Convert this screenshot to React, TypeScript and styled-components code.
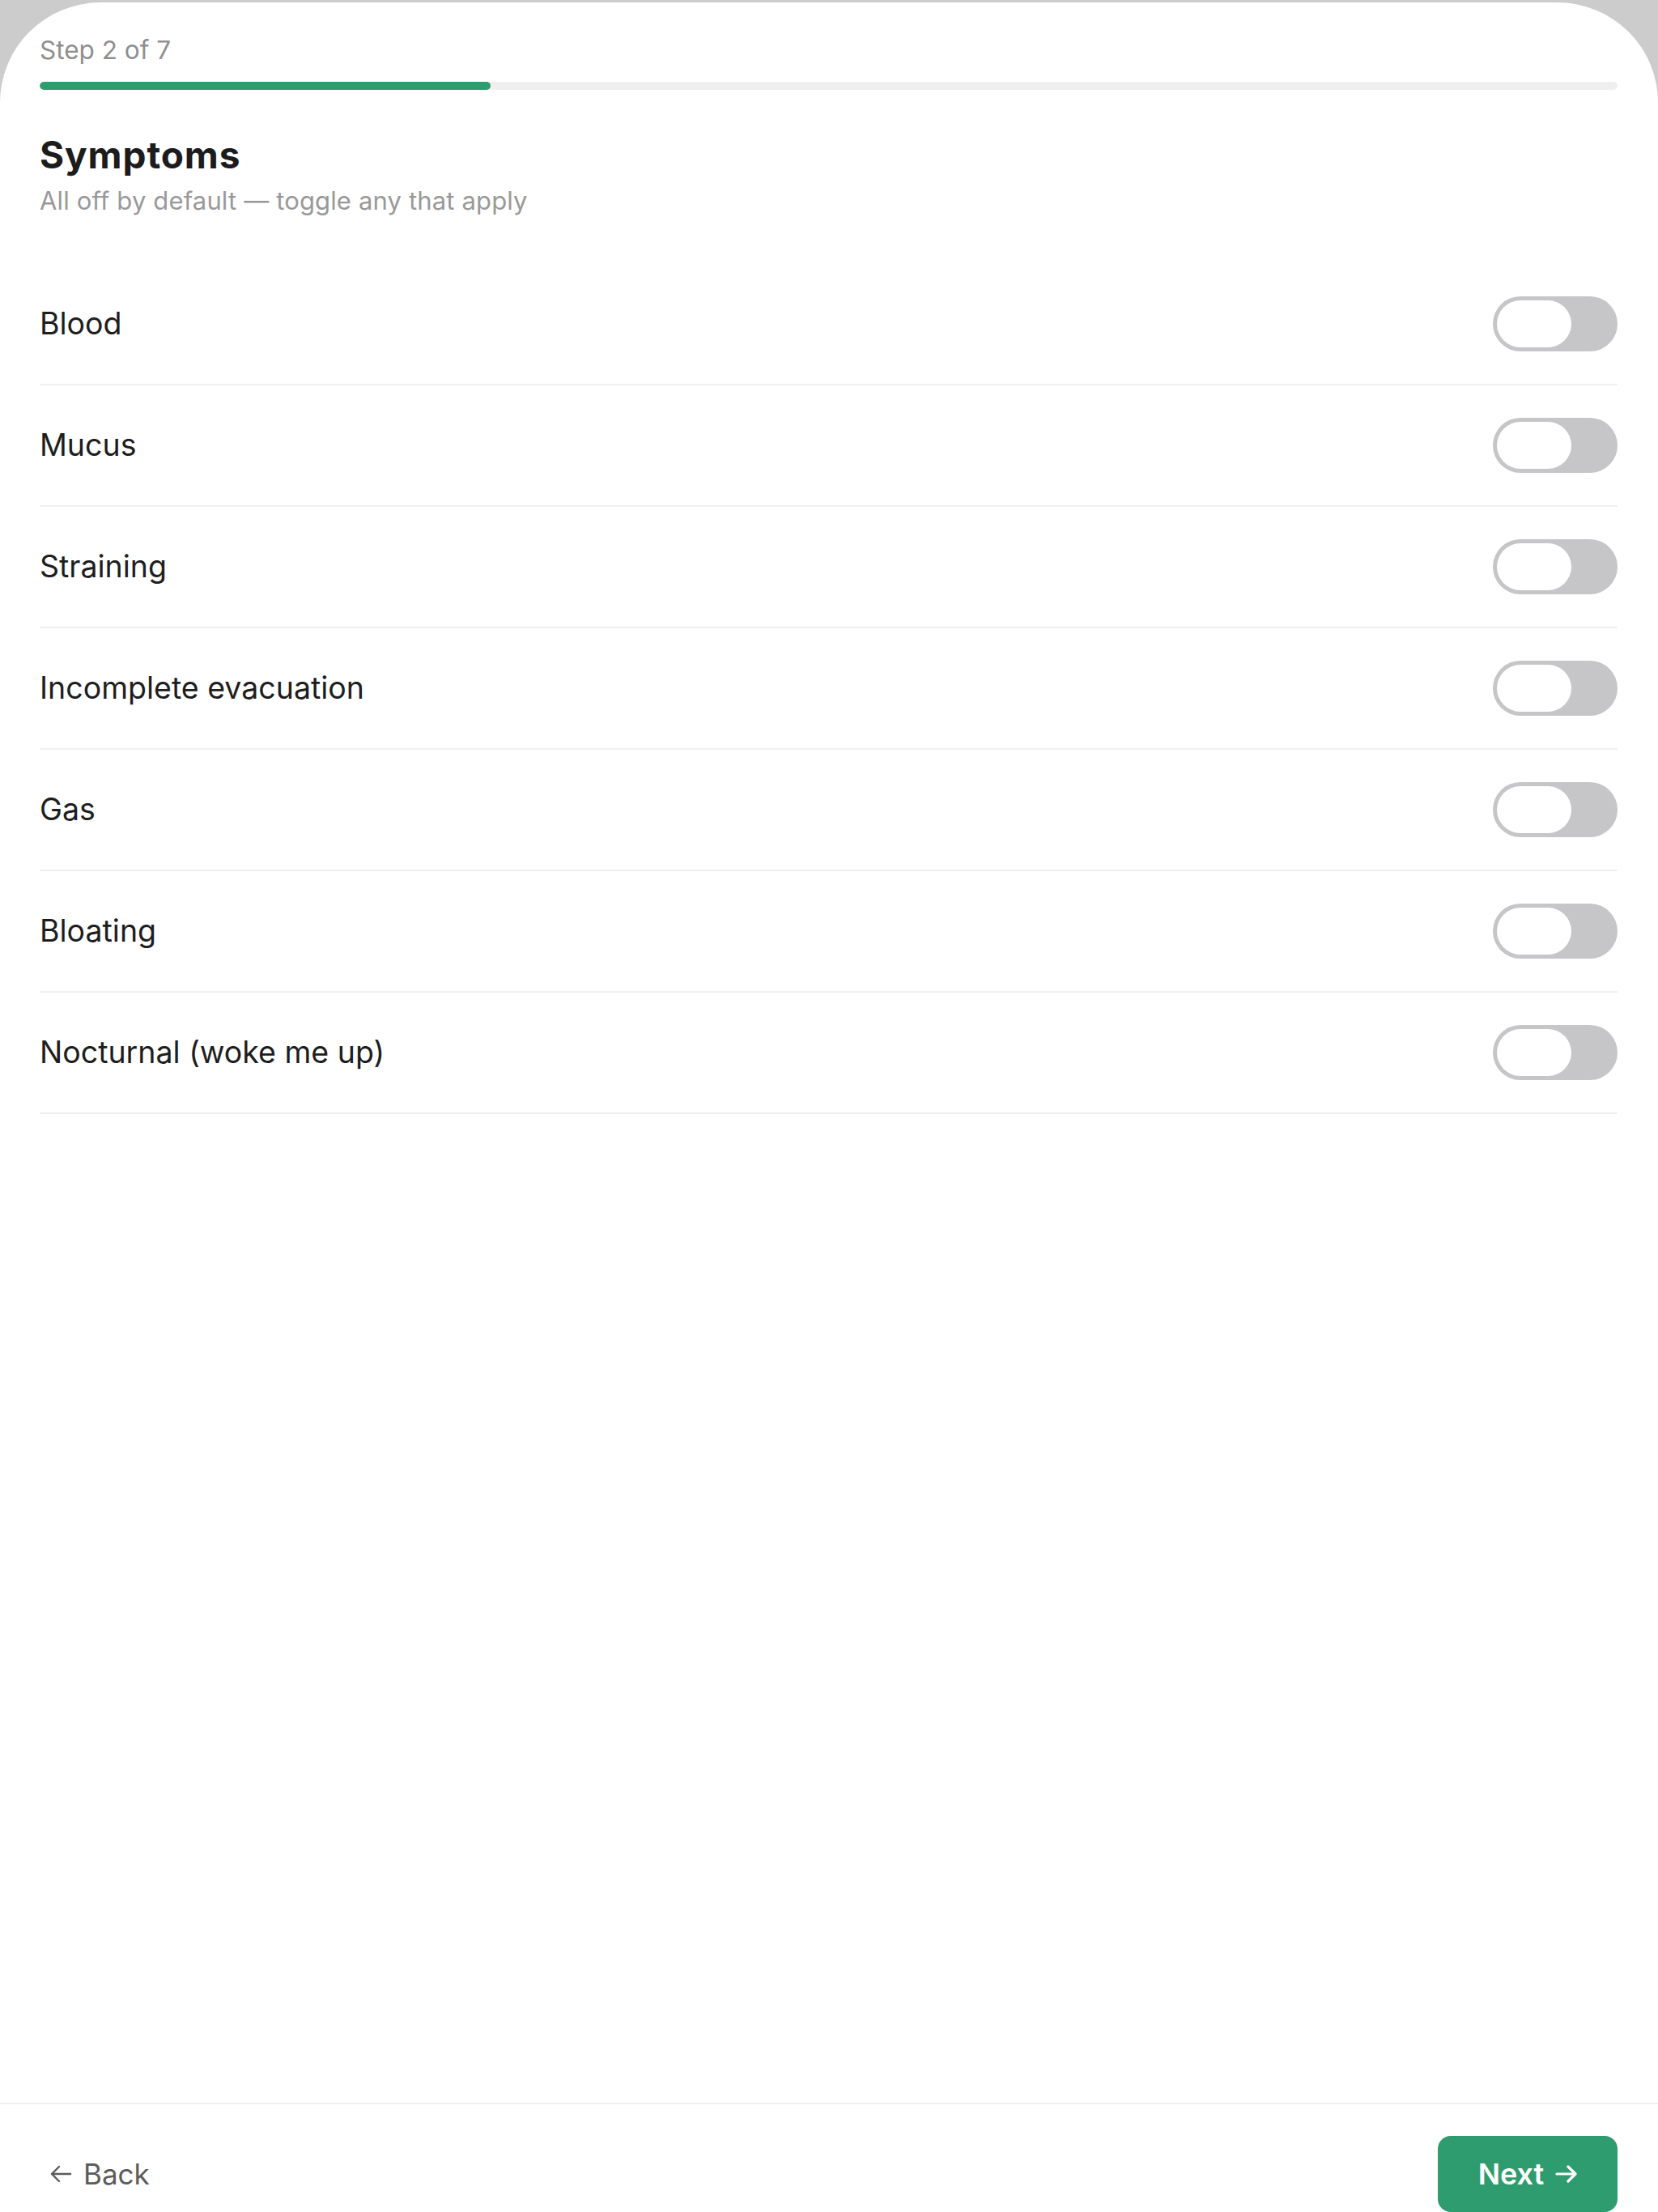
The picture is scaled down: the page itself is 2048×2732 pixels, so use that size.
import React, { useState } from 'react';
import styled, { createGlobalStyle } from 'styled-components';

const GlobalStyle = createGlobalStyle`
  html, body {
    margin: 0;
    padding: 0;
    background: #cccccc;
  }
  body {
    font-family: Inter, "Noto Sans", "Liberation Sans", sans-serif;
    -webkit-font-smoothing: antialiased;
  }
  * {
    box-sizing: border-box;
  }
`;

const ACCENT = '#2f9c6f';

const Sheet = styled.div`
  margin-top: 3px;
  height: calc(100vh - 3px);
  background: #ffffff;
  border-top-left-radius: 124px;
  border-top-right-radius: 124px;
  display: flex;
  flex-direction: column;
  overflow: hidden;
`;

const Body = styled.main`
  flex: 1;
  padding: 40px 50px 0 49px;
  display: flex;
  flex-direction: column;
`;

const StepLabel = styled.div`
  font-size: 31.5px;
  line-height: 37px;
  color: #8f8f8f;
`;

const ProgressTrack = styled.div`
  margin-top: 21px;
  height: 10px;
  border-radius: 5px;
  background: #efefef;
  overflow: hidden;
`;

const ProgressFill = styled.div`
  height: 100%;
  border-radius: 5px;
  background: ${ACCENT};
`;

const Title = styled.h1`
  margin: 54px 0 0;
  font-size: 46px;
  line-height: 52px;
  font-weight: 700;
  color: #1c1c1c;
  letter-spacing: 0.9px;
`;

const Subtitle = styled.p`
  margin: 13px 0 0;
  font-size: 31px;
  line-height: 36px;
  color: #999999;
  letter-spacing: 0.15px;
`;

const List = styled.ul`
  list-style: none;
  margin: 60px 0 0;
  padding: 0;
`;

const Row = styled.li`
  height: 150px;
  display: flex;
  align-items: center;
  justify-content: space-between;
  border-bottom: 2px solid #efefef;
`;

const RowLabel = styled.span`
  font-size: 37.5px;
  line-height: 44px;
  color: #1e1e1e;
`;

const Track = styled.button<{ $on: boolean }>`
  position: relative;
  width: 154px;
  height: 68px;
  padding: 0;
  border: none;
  border-radius: 34px;
  background: ${({ $on }) => ($on ? ACCENT : '#c6c6c8')};
  cursor: pointer;
  flex-shrink: 0;
`;

const Thumb = styled.span<{ $on: boolean }>`
  position: absolute;
  top: 5px;
  left: ${({ $on }) => ($on ? '57px' : '5px')};
  width: 92px;
  height: 58px;
  border-radius: 29px;
  background: #ffffff;
  transition: left 0.2s ease;
`;

const Footer = styled.footer`
  border-top: 2px solid #f0f0f0;
  padding: 39px 50px 0 49px;
  display: flex;
  justify-content: space-between;
  align-items: flex-start;
`;

const BackButton = styled.button`
  display: flex;
  align-items: center;
  gap: 14px;
  height: 94px;
  padding: 0 0 0 13px;
  border: none;
  background: none;
  font-family: inherit;
  font-size: 35px;
  color: #5c5c5c;
  cursor: pointer;
`;

const NextButton = styled.button`
  display: flex;
  align-items: center;
  justify-content: center;
  gap: 14px;
  width: 222px;
  height: 94px;
  border: none;
  border-radius: 16px;
  background: ${ACCENT};
  font-family: inherit;
  font-size: 36px;
  font-weight: 600;
  color: #ffffff;
  cursor: pointer;
`;

const Arrow = ({ dir, weight }: { dir: 'left' | 'right'; weight: number }) => (
  <svg width="27" height="22" viewBox="0 0 27 22" fill="none" stroke="currentColor"
    strokeWidth={weight} strokeLinecap="round" strokeLinejoin="round"
    style={{ transform: dir === 'left' ? 'scaleX(-1)' : undefined }}>
    <path d="M2 11h23M16 2l9 9-9 9" />
  </svg>
);

const symptoms = [
  'Blood',
  'Mucus',
  'Straining',
  'Incomplete evacuation',
  'Gas',
  'Bloating',
  'Nocturnal (woke me up)',
];

const Toggle = ({ on, onChange }: { on: boolean; onChange: () => void }) => (
  <Track $on={on} role="switch" aria-checked={on} onClick={onChange}>
    <Thumb $on={on} />
  </Track>
);

export default function App() {
  const step = 2;
  const total = 7;
  const [checked, setChecked] = useState<Record<string, boolean>>({});

  return (
    <>
      <GlobalStyle />
      <Sheet>
        <Body>
          <StepLabel>Step {step} of {total}</StepLabel>
          <ProgressTrack>
            <ProgressFill style={{ width: `${(step / total) * 100}%` }} />
          </ProgressTrack>
          <Title>Symptoms</Title>
          <Subtitle>All off by default — toggle any that apply</Subtitle>
          <List>
            {symptoms.map((name) => (
              <Row key={name}>
                <RowLabel>{name}</RowLabel>
                <Toggle
                  on={!!checked[name]}
                  onChange={() => setChecked((c) => ({ ...c, [name]: !c[name] }))}
                />
              </Row>
            ))}
          </List>
        </Body>
        <Footer>
          <BackButton>
            <Arrow dir="left" weight={2.4} />
            Back
          </BackButton>
          <NextButton>
            Next
            <Arrow dir="right" weight={3.2} />
          </NextButton>
        </Footer>
      </Sheet>
    </>
  );
}
